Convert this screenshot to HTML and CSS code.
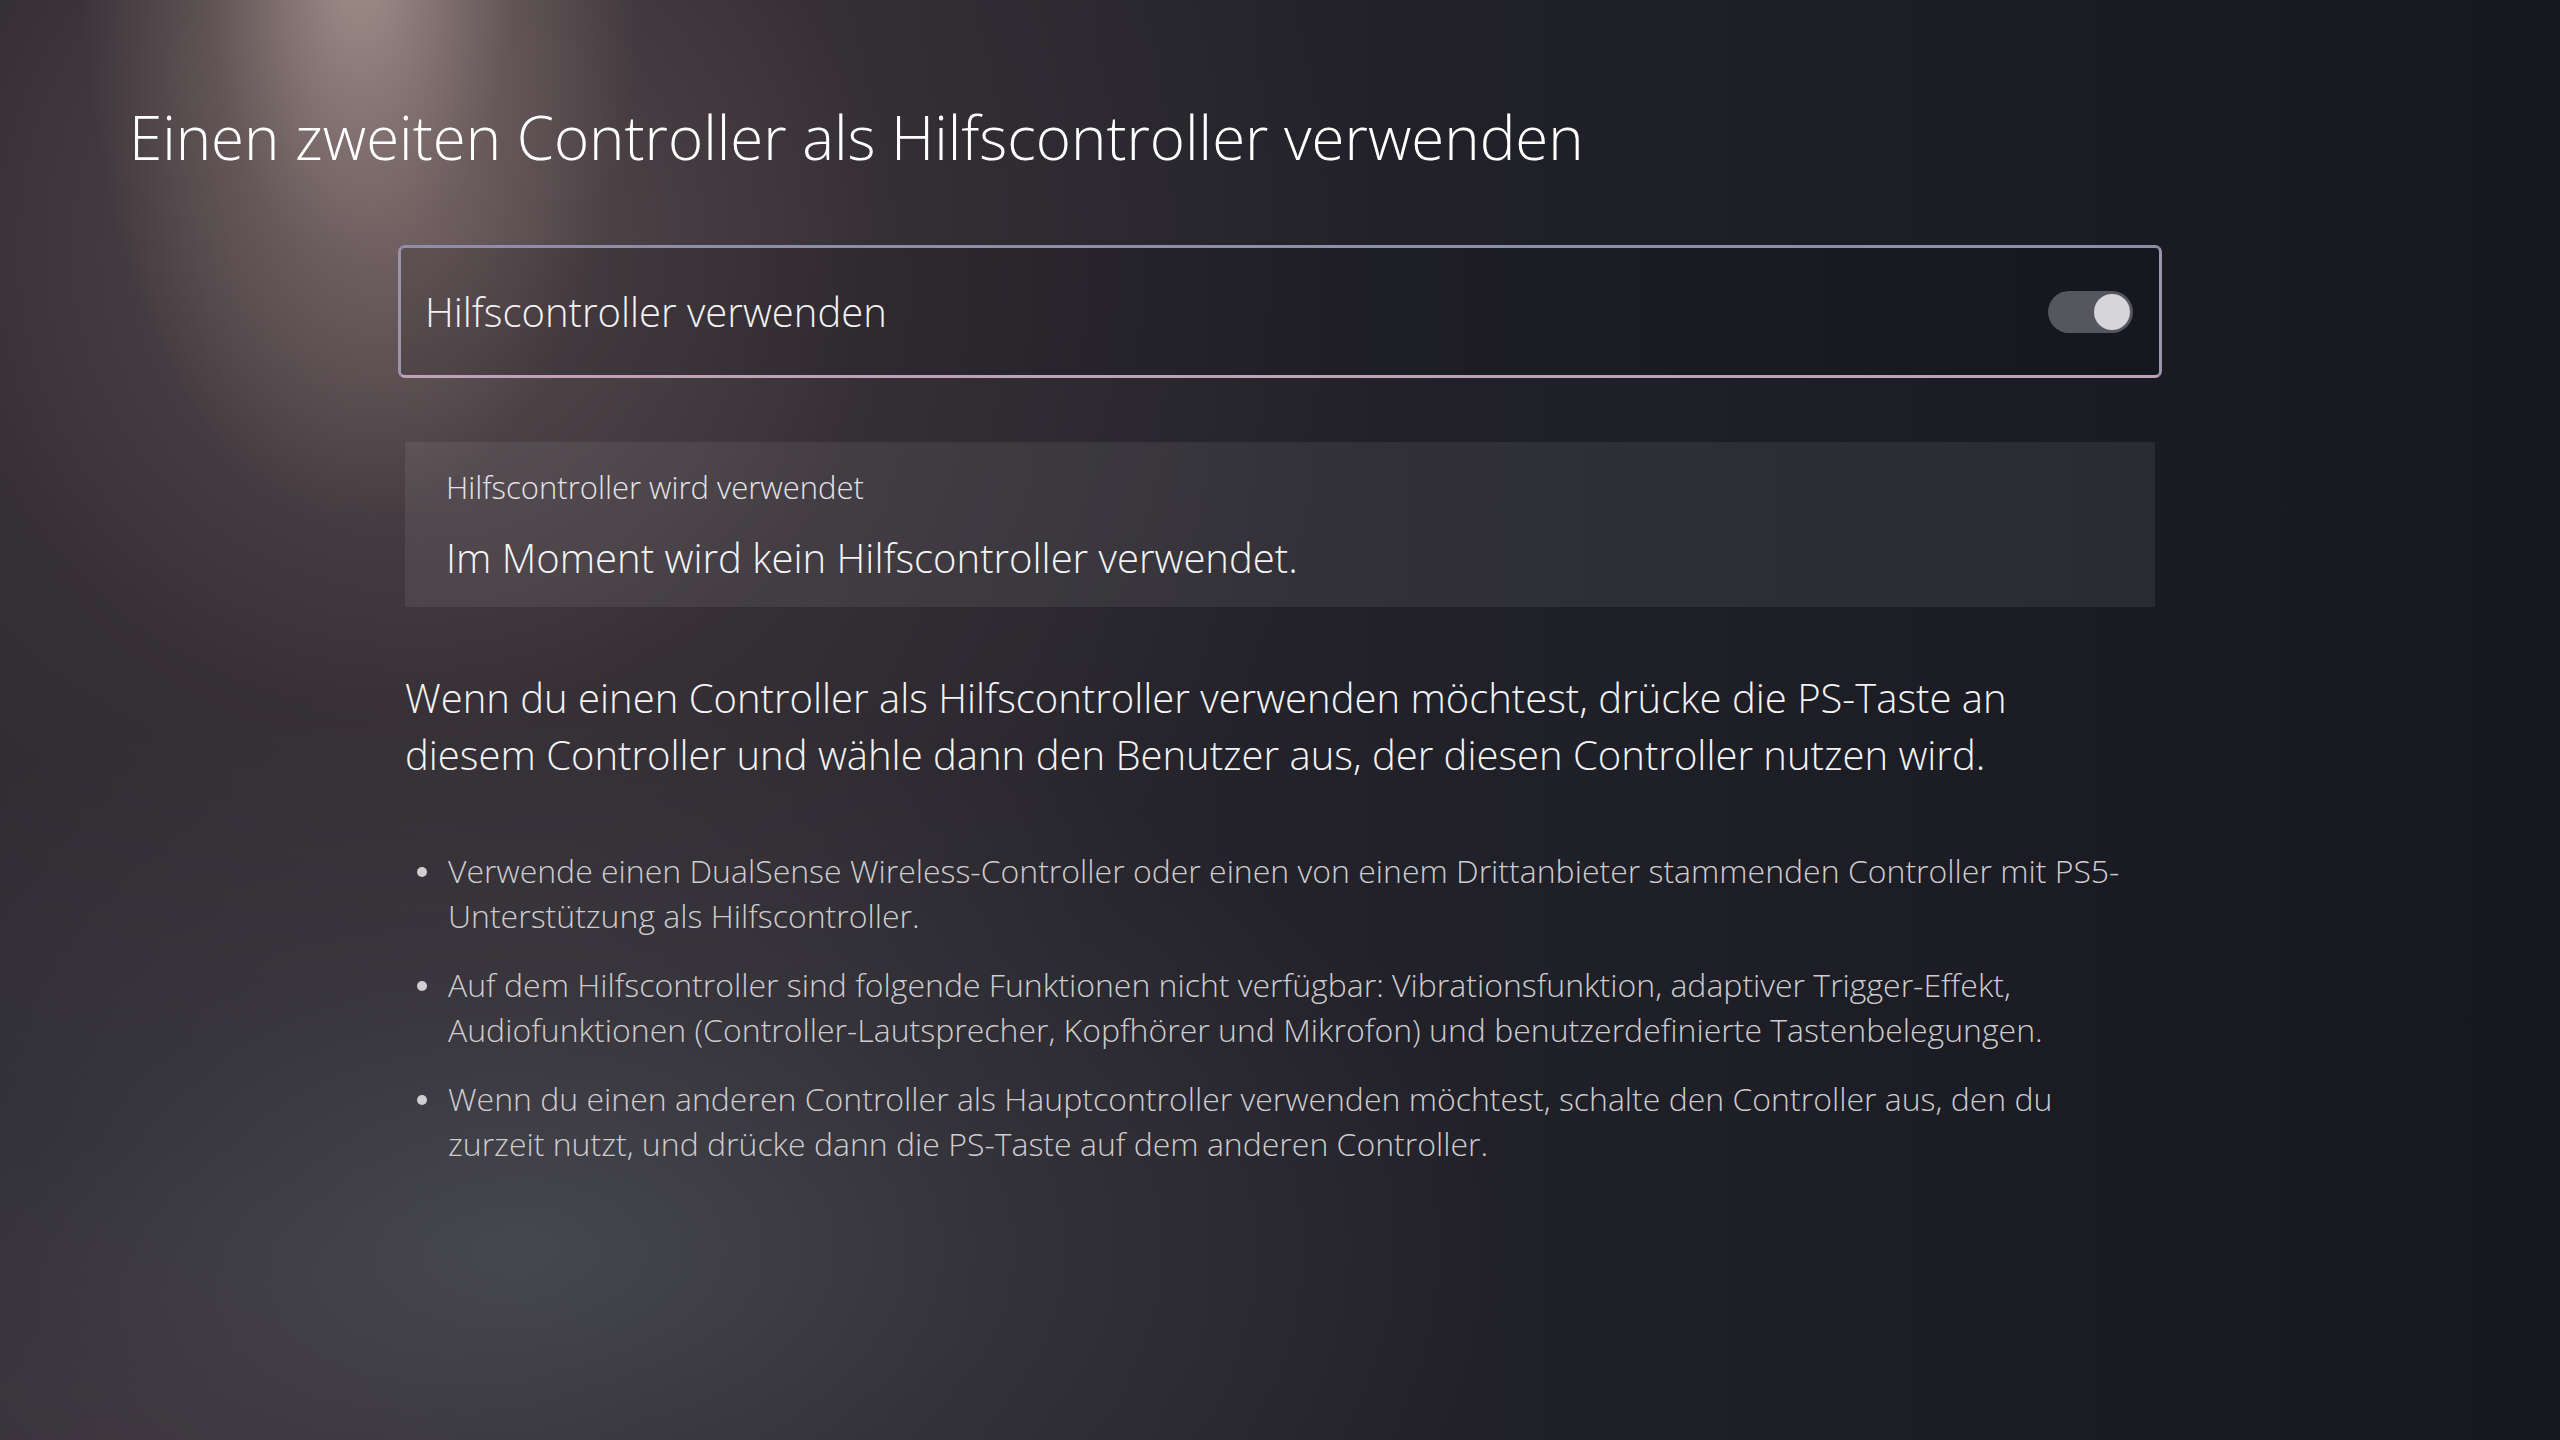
FILE: index.html
```html
<!DOCTYPE html>
<html lang="de">
<head>
<meta charset="utf-8">
<title>Hilfscontroller</title>
<link rel="stylesheet" href="styles.css">
</head>
<body>
<div class="screen">
	<h1 class="pageTitle">Einen zweiten Controller als Hilfscontroller verwenden</h1>

	<div class="content">
		<div class="toggleRow">
			<span class="toggleLabel">Hilfscontroller verwenden</span>
			<span class="switch"><span class="knob"></span></span>
		</div>

		<div class="statusBox">
			<div class="statusLabel">Hilfscontroller wird verwendet</div>
			<div class="statusValue">Im Moment wird kein Hilfscontroller verwendet.</div>
		</div>

		<p class="intro">Wenn du einen Controller als Hilfscontroller verwenden möchtest, drücke die PS-Taste an diesem Controller und wähle dann den Benutzer aus, der diesen Controller nutzen wird.</p>

		<ul class="notes">
			<li>Verwende einen DualSense Wireless-Controller oder einen von einem Drittanbieter stammenden Controller mit PS5-Unterstützung als Hilfscontroller.</li>
			<li>Auf dem Hilfscontroller sind folgende Funktionen nicht verfügbar: Vibrationsfunktion, adaptiver Trigger-Effekt, Audiofunktionen (Controller-Lautsprecher, Kopfhörer und Mikrofon) und benutzerdefinierte Tastenbelegungen.</li>
			<li>Wenn du einen anderen Controller als Hauptcontroller verwenden möchtest, schalte den Controller aus, den du zurzeit nutzt, und drücke dann die PS-Taste auf dem anderen Controller.</li>
		</ul>
	</div>
</div>
</body>
</html>
```

FILE: styles.css
```css
html, body {
	margin: 0;
	padding: 0;
}
body {
	width: 2560px;
	height: 1440px;
	overflow: hidden;
	font-family: "Open Sans", "Noto Sans", sans-serif;
	font-weight: 300;
	color: #f2f2f4;
	background-color: #1b1a22;
	background-image:
		radial-gradient(ellipse 280px 560px at 360px -40px, rgba(178,158,152,0.85), rgba(150,128,124,0.35) 55%, rgba(120,100,100,0) 100%),
		radial-gradient(ellipse 950px 950px at 420px 250px, rgba(110,92,94,0.7), rgba(80,68,72,0.3) 50%, rgba(60,50,56,0) 100%),
		radial-gradient(ellipse 1000px 560px at 520px 1250px, rgba(80,82,90,0.75), rgba(68,68,76,0.4) 50%, rgba(60,60,70,0) 100%),
		radial-gradient(ellipse 500px 300px at 150px 1440px, rgba(70,52,60,0.6), rgba(70,52,60,0) 100%),
		linear-gradient(90deg, #2b282f 0%, #2a272e 30%, #202028 60%, #17171f 100%);
}

.screen {
	padding: 101px 0 0 129px;
}

.pageTitle {
	margin: 0;
	font-size: 60px;
	font-weight: 300;
	line-height: 72px;
	color: #ffffff;
}

.content {
	width: 1750px;
	margin-left: 276px;
	margin-top: 72px;
}

.toggleRow {
	display: flex;
	align-items: center;
	justify-content: space-between;
	height: 127px;
	margin: 0 -7px;
	padding: 0 26px 0 24px;
	border: 3px solid #9895ad;
	border-top-color: #8c8eab;
	border-bottom-color: #bea3b8;
	border-radius: 7px;
	background-color: rgba(6,6,14,0.15);
}
.toggleLabel {
	font-size: 40px;
	line-height: 52px;
	color: #f2f1f3;
}
.switch {
	display: flex;
	justify-content: flex-end;
	align-items: center;
	box-sizing: border-box;
	width: 85px;
	height: 42px;
	padding: 0 3px;
	border-radius: 21px;
	background-color: #56565f;
}
.knob {
	width: 36px;
	height: 36px;
	border-radius: 50%;
	background-color: #d6d5da;
}

.statusBox {
	margin-top: 64px;
	padding: 25px 41px 23px 41px;
	background-color: rgba(255,255,255,0.07);
}
.statusLabel {
	font-size: 31px;
	line-height: 40px;
	color: #e4e3e7;
}
.statusValue {
	margin-top: 25px;
	font-size: 40px;
	line-height: 52px;
	color: #f4f4f6;
}

.intro {
	margin: 62px 0 0 0;
	max-width: 1720px;
	font-size: 40px;
	line-height: 57px;
	color: #f4f4f6;
}

.notes {
	list-style: none;
	margin: 65px 0 0 0;
	padding: 0;
}
.notes li {
	display: flex;
	margin-bottom: 24px;
	font-size: 32px;
	line-height: 45px;
	color: #cecccf;
}
.notes li::before {
	content: "";
	flex: none;
	width: 10px;
	height: 10px;
	margin: 19px 21px 0 12px;
	border-radius: 50%;
	background-color: #d0ced3;
}
```
